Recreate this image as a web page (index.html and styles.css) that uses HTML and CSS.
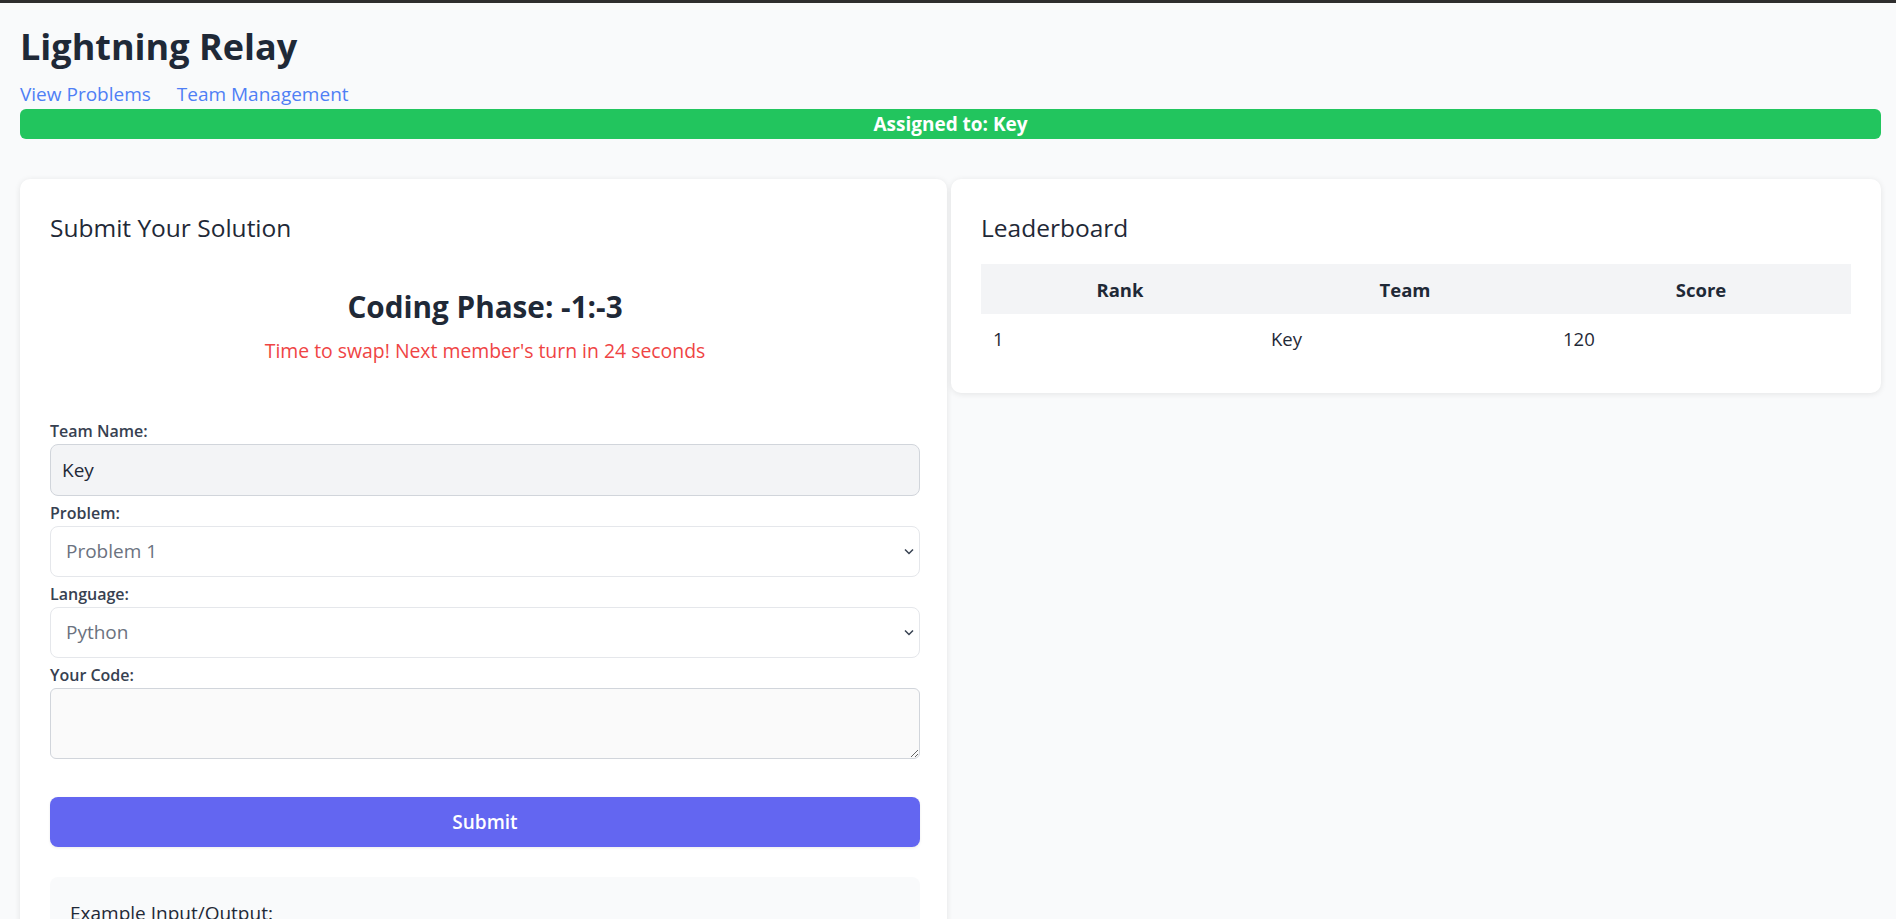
FILE: index.html
```html
<!DOCTYPE html>
<html lang="en">
<head>
<meta charset="utf-8">
<title>Lightning Relay</title>
<link rel="stylesheet" href="styles.css">
</head>
<body>
<div class="topline"></div>
<div class="page">
  <header class="header">
    <h1 class="title">Lightning Relay</h1>
    <nav class="nav">
      <a class="nav-link" href="#">View Problems</a>
      <a class="nav-link" href="#">Team Management</a>
    </nav>
    <div class="assigned">Assigned to: Key</div>
  </header>

  <main class="grid">
    <section class="card card-submit">
      <h2 class="card-title">Submit Your Solution</h2>
      <div class="phase">
        <div class="phase-title">Coding Phase: -1:-3</div>
        <div class="phase-warn">Time to swap! Next member's turn in 24 seconds</div>
      </div>
      <form class="form">
        <label class="label">Team Name:</label>
        <input class="input input-readonly" type="text" value="Key" readonly>
        <label class="label">Problem:</label>
        <div class="select-wrap">
          <select class="select">
            <option>Problem 1</option>
            <option>Problem 2</option>
          </select>
          <svg class="chev" width="10" height="7" viewBox="0 0 10 7"><path d="M1 1.5l4 4 4-4" fill="none" stroke="#374151" stroke-width="1.5"/></svg>
        </div>
        <label class="label">Language:</label>
        <div class="select-wrap">
          <select class="select">
            <option>Python</option>
            <option>JavaScript</option>
          </select>
          <svg class="chev" width="10" height="7" viewBox="0 0 10 7"><path d="M1 1.5l4 4 4-4" fill="none" stroke="#374151" stroke-width="1.5"/></svg>
        </div>
        <label class="label">Your Code:</label>
        <textarea class="code"></textarea>
        <button class="submit" type="button">Submit</button>
      </form>
      <div class="example">
        <div class="example-title">Example Input/Output:</div>
        <pre class="example-pre">Input: 1 2
Output: 3</pre>
      </div>
    </section>

    <section class="card">
      <h2 class="card-title">Leaderboard</h2>
      <table class="board">
        <colgroup>
          <col class="c1"><col class="c2"><col class="c3">
        </colgroup>
        <thead>
          <tr><th>Rank</th><th>Team</th><th>Score</th></tr>
        </thead>
        <tbody>
          <tr><td>1</td><td>Key</td><td>120</td></tr>
        </tbody>
      </table>
    </section>
  </main>
</div>
</body>
</html>
```

FILE: styles.css
```css
* { box-sizing: border-box; }

html {
  overflow: hidden;
}

body {
  margin: 0;
  background: #f9fafb;
  font-family: "Open Sans", "Noto Sans", sans-serif;
  color: #1f2937;
}

.topline {
  height: 3px;
  background: #2e2e2e;
}

.page {
  padding: 0 15px 40px 20px;
}

.header {
  padding-top: 20px;
}

.title {
  margin: 0;
  font-size: 36px;
  line-height: 48px;
  font-weight: 700;
  color: #1f2937;
}

.nav {
  display: flex;
  gap: 26px;
  margin-top: 9px;
}

.nav-link {
  font-size: 19px;
  line-height: 28px;
  color: #4f7ff5;
  text-decoration: none;
}

.assigned {
  margin-top: 1px;
  height: 30px;
  line-height: 30px;
  background: #22c55e;
  border-radius: 6px;
  color: #fff;
  font-weight: 700;
  font-size: 19px;
  text-align: center;
}

.grid {
  margin-top: 40px;
  display: grid;
  grid-template-columns: 1fr 1fr;
  gap: 4px;
  align-items: start;
}

.card {
  background: #fff;
  border-radius: 10px;
  box-shadow: 0 1px 6px rgba(0, 0, 0, 0.09);
  padding: 30px;
}

.card-submit {
  padding-right: 27px;
}

.card-title {
  margin: 0;
  font-size: 24.5px;
  line-height: 37.5px;
  font-weight: 500;
  color: #1f2937;
}

.phase {
  margin-top: 37px;
  text-align: center;
}

.phase-title {
  font-size: 29.7px;
  line-height: 45px;
  font-weight: 700;
  color: #1f2937;
}

.phase-warn {
  margin-top: 7px;
  font-size: 19.4px;
  line-height: 30px;
  color: #ef4444;
}

.form {
  margin-top: 52px;
  display: flex;
  flex-direction: column;
}

.label {
  display: block;
  font-size: 16px;
  line-height: 26px;
  font-weight: 600;
  color: #374151;
  margin-top: 4px;
}

.label:first-child {
  margin-top: 0;
}

.input {
  height: 52px;
  width: 100%;
  border: 1px solid #d1d5db;
  border-radius: 8px;
  padding: 0 11px;
  font-family: inherit;
  font-size: 19px;
  color: #1f2937;
  outline: none;
}

.input-readonly {
  background: #f3f4f6;
}

.select-wrap {
  position: relative;
}

.select {
  appearance: none;
  -webkit-appearance: none;
  width: 100%;
  height: 51px;
  border: 1px solid #e5e7eb;
  border-radius: 8px;
  background: #fff;
  padding: 0 15px;
  font-family: inherit;
  font-size: 19px;
  color: #6b7280;
  outline: none;
}

.chev {
  position: absolute;
  right: 6px;
  top: 22px;
  pointer-events: none;
}

.code {
  display: block;
  width: 100%;
  height: 71px;
  margin-top: 0;
  background: #fafafa;
  border: 1px solid #d1d5db;
  border-radius: 6px;
  font-family: "Liberation Mono", monospace;
  font-size: 16px;
  resize: vertical;
  outline: none;
}

.submit {
  margin-top: 38px;
  height: 50px;
  width: 100%;
  border: none;
  border-radius: 8px;
  background: #6366f1;
  color: #fff;
  font-family: inherit;
  font-size: 19px;
  font-weight: 600;
  box-shadow: 0 1px 3px rgba(0, 0, 0, 0.08);
}

.example {
  margin-top: 30px;
  background: #f9fafb;
  border-radius: 8px;
  padding: 22px 20px 20px;
}

.example-title {
  font-size: 19px;
  line-height: 28px;
  font-weight: 500;
  color: #1f2937;
}

.example-pre {
  margin: 10px 0 0;
  font-family: "Liberation Mono", monospace;
  font-size: 16px;
  color: #374151;
}

.board {
  margin-top: 17.5px;
  width: 100%;
  border-collapse: collapse;
  table-layout: fixed;
}

.c1 { width: 278px; }
.c2 { width: 292px; }
.c3 { width: 300px; }

.board th {
  background: #f3f4f6;
  height: 50px;
  padding: 0 12px;
  font-size: 18.5px;
  font-weight: 700;
  color: #1f2937;
  text-align: center;
}

.board td {
  height: 49px;
  padding: 0 12px;
  font-size: 18.5px;
  color: #1f2937;
  text-align: left;
}
```
